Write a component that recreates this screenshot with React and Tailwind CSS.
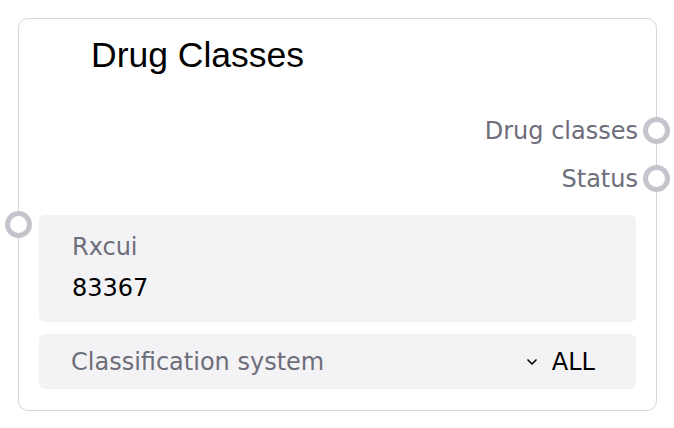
import { ChevronDown } from "lucide-react";

const Handle = ({ className }) => (
  <span
    className={
      "absolute w-[27px] h-[27px] rounded-full border-[5px] border-[#c4c4cc] bg-white " +
      className
    }
  />
);

const App = () => {
  return (
    <div className="min-h-screen bg-white p-[18px] font-['DejaVu_Sans',sans-serif]">
      <div className="relative w-[639px] h-[393px] rounded-[10px] border border-[#d6d6dc] bg-white">
        {/* Title */}
        <div className="pl-[72px] pt-[16px] h-[88px] font-['Liberation_Sans',Arial,sans-serif] text-[35.5px] leading-[40px] text-black">
          Drug Classes
        </div>

        {/* Outputs */}
        <div className="flex flex-col items-end pr-[18px]">
          {["Drug classes", "Status"].map((label) => (
            <div key={label} className="relative flex items-center h-[48px] text-[24px] text-[#6e6e7a]">
              {label}
              <Handle className="-right-[32px] top-[10px]" />
            </div>
          ))}
        </div>

        {/* Inputs */}
        <div className="relative mt-[12px] px-[20px] flex flex-col gap-[12px]">
          <Handle className="-left-[14px] -top-[4px]" />
          <div className="h-[107px] rounded-[6px] bg-[#f3f3f5] pl-[33px] pt-[17px]">
            <div className="text-[24px] leading-[30px] text-[#6e6e7a]">Rxcui</div>
            <div className="mt-[11px] text-[24px] leading-[30px] text-black">83367</div>
          </div>
          <div className="h-[55px] rounded-[6px] bg-[#f3f3f5] pl-[32px] pr-[41px] flex items-center justify-between">
            <span className="text-[24px] text-[#6e6e7a]">Classification system</span>
            <span className="flex items-center gap-[12px] text-[24px] text-black">
              <ChevronDown size={16} strokeWidth={2.5} />
              ALL
            </span>
          </div>
        </div>
      </div>
    </div>
  );
};

export default App;
